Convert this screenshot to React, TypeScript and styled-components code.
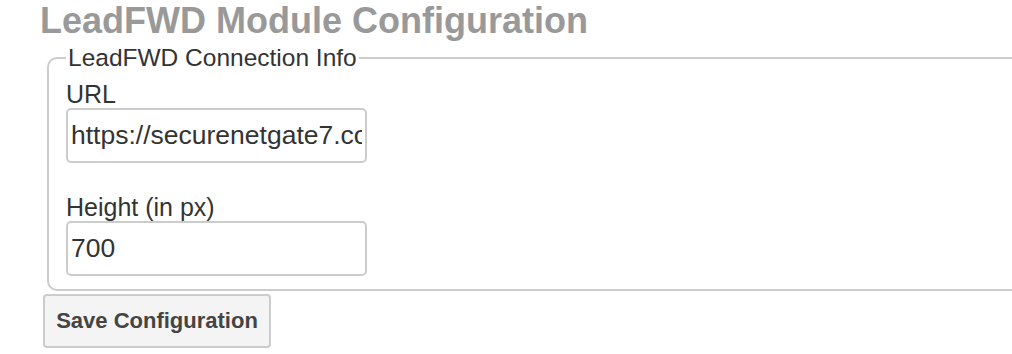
import { useState } from "react";
import styled, { createGlobalStyle } from "styled-components";

const GlobalStyle = createGlobalStyle`
  body {
    margin: 0;
    background: #fff;
    font-family: "Liberation Sans", Arial, Helvetica, sans-serif;
  }
`;

const Page = styled.div`
  padding: 0 0 0 40px;
  overflow: hidden;
`;

const Title = styled.h1`
  margin: 0;
  padding-top: 1px;
  font-size: 36px;
  line-height: 40px;
  font-weight: bold;
  color: #999;
`;

const Box = styled.fieldset`
  margin: 3px 0 0 7px;
  width: 1100px;
  min-width: 0;
  border: 2px solid #ccc;
  border-radius: 10px;
  padding: 8px 17px 13px;
`;

const Legend = styled.legend`
  padding: 0 2px;
  font-size: 24.5px;
  line-height: 27.6px;
  color: #333;
`;

const Field = styled.div`
  margin-bottom: 30px;
  &:last-child {
    margin-bottom: 0;
  }
`;

const Label = styled.label`
  display: block;
  font-size: 25px;
  line-height: 28px;
  color: #333;
`;

const Input = styled.input`
  display: block;
  box-sizing: border-box;
  width: 301px;
  height: 55px;
  padding: 0 3px;
  border: 2px solid #ccc;
  border-radius: 5px;
  font-family: inherit;
  font-size: 26.5px;
  color: #333;
  background: #fff;
  outline: none;
`;

const SaveButton = styled.button`
  display: block;
  box-sizing: border-box;
  margin: 3px 0 0 3px;
  width: 228px;
  height: 54px;
  background: #f4f4f4;
  border: 2px solid #ccc;
  border-radius: 4px;
  font-family: inherit;
  font-size: 22px;
  font-weight: bold;
  color: #444;
  cursor: pointer;
`;

export default function App() {
  const [url, setUrl] = useState("https://securenetgate7.com/leadfwd/form");
  const [height, setHeight] = useState("700");

  return (
    <Page>
      <GlobalStyle />
      <Title>LeadFWD Module Configuration</Title>
      <Box>
        <Legend>LeadFWD Connection Info</Legend>
        <Field>
          <Label htmlFor="lf-url">URL</Label>
          <Input id="lf-url" value={url} onChange={(e) => setUrl(e.target.value)} />
        </Field>
        <Field>
          <Label htmlFor="lf-height">Height (in px)</Label>
          <Input
            id="lf-height"
            value={height}
            onChange={(e) => setHeight(e.target.value)}
          />
        </Field>
      </Box>
      <SaveButton type="button">Save Configuration</SaveButton>
    </Page>
  );
}
